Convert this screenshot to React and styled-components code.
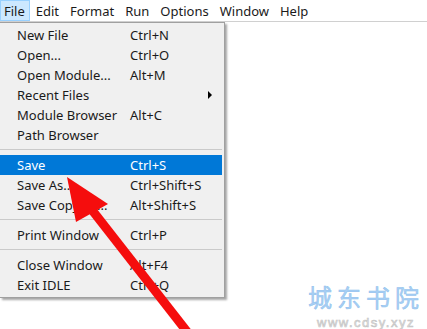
import React from "react";
import styled, { createGlobalStyle } from "styled-components";

const GlobalStyle = createGlobalStyle`
  html, body {
    margin: 0;
    padding: 0;
    background: #ffffff;
  }
`;

const menuBarItems = ["File", "Edit", "Format", "Run", "Options", "Window", "Help"];

const fileMenu = [
  [
    { label: "New File", key: "Ctrl+N" },
    { label: "Open...", key: "Ctrl+O" },
    { label: "Open Module...", key: "Alt+M" },
    { label: "Recent Files", key: "", sub: true },
    { label: "Module Browser", key: "Alt+C" },
    { label: "Path Browser", key: "" },
  ],
  [
    { label: "Save", key: "Ctrl+S", active: true },
    { label: "Save As...", key: "Ctrl+Shift+S" },
    { label: "Save Copy As...", key: "Alt+Shift+S" },
  ],
  [{ label: "Print Window", key: "Ctrl+P" }],
  [
    { label: "Close Window", key: "Alt+F4" },
    { label: "Exit IDLE", key: "Ctrl+Q" },
  ],
];

function App() {
  return (
    <>
      <GlobalStyle />
      <Page>
        <MenuBar>
          {menuBarItems.map((name) => (
            <BarItem key={name} open={name === "File"}>
              {name}
            </BarItem>
          ))}
        </MenuBar>

        <Dropdown>
          {fileMenu.map((group, i) => (
            <React.Fragment key={i}>
              {i > 0 && <Separator />}
              {group.map((item) => (
                <Row key={item.label} active={item.active}>
                  <Label>{item.label}</Label>
                  <Shortcut>{item.key}</Shortcut>
                  {item.sub && <SubArrow />}
                </Row>
              ))}
            </React.Fragment>
          ))}
        </Dropdown>

        <Pointer viewBox="0 0 427 329" width="427" height="329">
          <line
            x1="92"
            y1="210"
            x2="192"
            y2="338"
            stroke="#f50d0d"
            strokeWidth="9"
          />
          <polygon points="67,177 76,222 108,204" fill="#f50d0d" />
        </Pointer>

        <Watermark>
          <Brand>城东书院</Brand>
          <Site>www.cdsy.xyz</Site>
        </Watermark>
      </Page>
    </>
  );
}

export default App;

const Page = styled.div`
  position: relative;
  width: 427px;
  height: 329px;
  overflow: hidden;
  background: #ffffff;
  font-family: "Noto Sans", "Open Sans", sans-serif;
  font-size: 13px;
  color: #1a1a1a;
`;

const MenuBar = styled.div`
  display: flex;
  align-items: stretch;
  height: 22px;
  border-bottom: 1px solid #d0d0d0;
  box-sizing: border-box;
`;

const BarItem = styled.div`
  display: flex;
  align-items: center;
  padding: 0 5px 0 4px;
  margin-right: 2px;
  line-height: 22px;
  background: ${(p) => (p.open ? "#cce8ff" : "transparent")};
  box-shadow: ${(p) => (p.open ? "inset 0 0 0 1px #99d1ff" : "none")};
`;

const Dropdown = styled.div`
  position: absolute;
  top: 22px;
  left: 0;
  width: 225px;
  box-sizing: border-box;
  padding: 2px 2px 2px 0;
  background: #f0f0f0;
  border: 1px solid #a0a0a0;
  border-left: none;
  box-shadow: 2px 2px 2px rgba(0, 0, 0, 0.35);
`;

const Row = styled.div`
  position: relative;
  display: grid;
  grid-template-columns: 113px 1fr;
  align-items: center;
  height: 20px;
  padding-left: 17px;
  background: ${(p) => (p.active ? "#0078d7" : "transparent")};
  color: ${(p) => (p.active ? "#ffffff" : "#1a1a1a")};
`;

const Label = styled.span`
  white-space: nowrap;
`;

const Shortcut = styled.span`
  white-space: nowrap;
`;

const SubArrow = styled.span`
  position: absolute;
  right: 10px;
  top: 6px;
  width: 0;
  height: 0;
  border-top: 4px solid transparent;
  border-bottom: 4px solid transparent;
  border-left: 4px solid #000000;
`;

const Separator = styled.div`
  height: 1px;
  margin: 4px 0 5px;
  background: #cacaca;
`;

const Pointer = styled.svg`
  position: absolute;
  top: 0;
  left: 0;
  pointer-events: none;
`;

const Watermark = styled.div`
  position: absolute;
  right: 3px;
  bottom: 0;
  display: flex;
  flex-direction: column;
  align-items: center;
  gap: 5px;
`;

const Brand = styled.div`
  font-family: "Liberation Sans", "Noto Sans CJK SC", sans-serif;
  font-size: 24px;
  line-height: 24px;
  letter-spacing: 5px;
  color: #a9d0f5;
  -webkit-text-stroke: 0.5px #8fbfec;
`;

const Site = styled.div`
  font-family: "Liberation Sans", sans-serif;
  font-size: 13px;
  line-height: 13px;
  letter-spacing: 1.5px;
  color: #e4e4e4;
  -webkit-text-stroke: 0.6px #c4c4c4;
`;
